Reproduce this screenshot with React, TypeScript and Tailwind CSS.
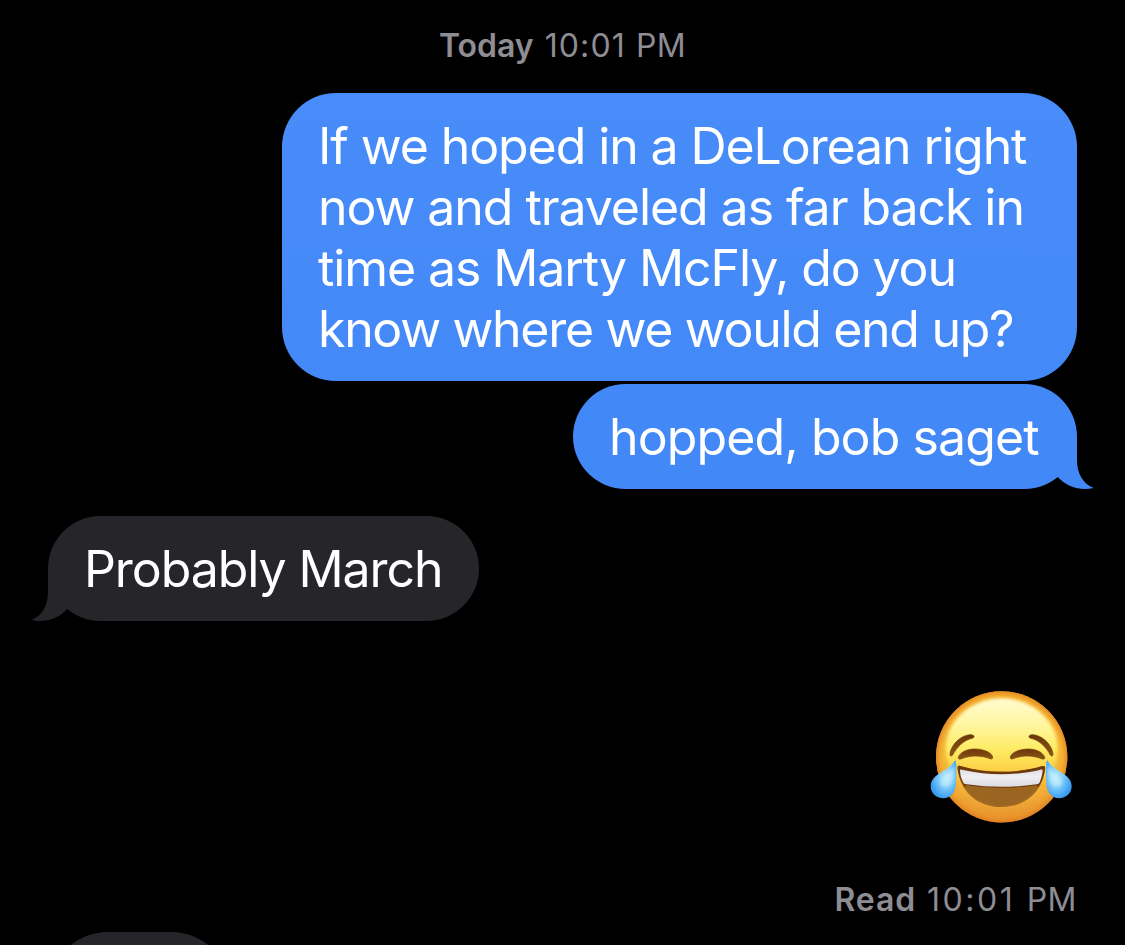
import React from 'react';
import clsx from 'clsx';

interface BubbleProps {
  sent?: boolean;
  tail?: boolean;
  className?: string;
  children?: React.ReactNode;
}

function Tail({ sent }: { sent?: boolean }): React.ReactElement {
  return (
    <svg
      viewBox="171 198 114 162"
      className={clsx(
        "absolute -bottom-px h-[54px] w-[38px]",
        sent ? "-right-[18px] fill-[#4288f7]" : "-left-[18px] -scale-x-100 fill-[#26252a]"
      )}
    >
      <path d="M231 270C231 312 250 342 281 354C240 362 202 352 173 321V198H231Z" />
    </svg>
  );
}

function Bubble({ sent, tail, className, children }: BubbleProps): React.ReactElement {
  return (
    <div
      className={clsx(
        "relative shrink-0 whitespace-nowrap pt-[23px] pl-9 text-[50px] leading-[61px] text-white",
        sent ? "self-end" : "self-start bg-[#26252a]",
        className
      )}
    >
      {tail && <Tail sent={sent} />}
      {children}
    </div>
  );
}

function JoyEmoji(): React.ReactElement {
  return (
    <svg viewBox="45 45 426 402" className="h-[134px] w-[142px]" role="img" aria-label="😂">
      <defs>
        <linearGradient id="face" x1="0" y1="0" x2="0" y2="1">
          <stop offset="0" stopColor="#f8c531" />
          <stop offset="0.15" stopColor="#f8c43c" />
          <stop offset="0.5" stopColor="#fbcd40" />
          <stop offset="0.78" stopColor="#f3b43c" />
          <stop offset="1" stopColor="#e5952f" />
        </linearGradient>
        <radialGradient id="rim" cx="0.5" cy="0.5" r="0.5">
          <stop offset="0.72" stopColor="#e98a22" stopOpacity="0" />
          <stop offset="0.92" stopColor="#e98a22" stopOpacity="0.38" />
          <stop offset="1" stopColor="#e07a20" stopOpacity="0.8" />
        </radialGradient>
        <linearGradient id="shine" x1="0" y1="0" x2="0" y2="1">
          <stop offset="0" stopColor="#fffbd0" />
          <stop offset="0.25" stopColor="#fff7a2" />
          <stop offset="0.5" stopColor="#feec65" />
          <stop offset="0.85" stopColor="#fcdb4c" stopOpacity="0" />
        </linearGradient>
        <linearGradient id="teeth" x1="0" y1="0" x2="0" y2="1">
          <stop offset="0" stopColor="#dcdce0" />
          <stop offset="0.4" stopColor="#f0f0f3" />
          <stop offset="1" stopColor="#dadadf" />
        </linearGradient>
        <linearGradient id="brown" x1="0" y1="0" x2="0" y2="1">
          <stop offset="0" stopColor="#6a3608" />
          <stop offset="1" stopColor="#8d5716" />
        </linearGradient>
        <radialGradient id="tear" cx="0.6" cy="0.42" r="0.6">
          <stop offset="0" stopColor="#b4e8fd" />
          <stop offset="0.45" stopColor="#84cffa" />
          <stop offset="1" stopColor="#3a9df0" />
        </radialGradient>
        <filter id="soft" x="-10%" y="-10%" width="120%" height="120%">
          <feGaussianBlur stdDeviation="5" />
        </filter>
        <g id="side">
          <path
            d="M105 237C108 209 138 179 168 179C178 179 181 188 171 190C147 195 125 217 113 240C110 245 104 243 105 237Z"
            fill="url(#brown)"
            stroke="#70400d"
            strokeWidth="2"
          />
          <path
            d="M130 247C134 233 156 221 180 222C207 222 230 233 233 246C234 253 228 253 222 250C195 240 164 241 140 251C133 254 129 252 130 247Z"
            fill="url(#brown)"
            stroke="#70400d"
            strokeWidth="2"
          />
        </g>
        <g id="drop">
          <path
            d="M122 258C126 270 124 306 123 328C121 354 106 370 85 370C64 370 47 354 47 334C47 316 59 304 79 292C97 281 111 270 117 260C119 256 121 255 122 258Z"
            fill="url(#tear)"
          />
          <path d="M116 275C117 300 113 331 94 335C76 337 71 318 84 307C99 296 109 286 116 275Z" fill="#d4f5fe" opacity="0.55" filter="url(#soft)" />
        </g>
      </defs>
      <circle cx="260" cy="245.5" r="197" fill="url(#face)" />
      <circle cx="260" cy="245.5" r="197" fill="url(#rim)" />
      <ellipse cx="260" cy="222" rx="168" ry="152" fill="url(#shine)" filter="url(#soft)" />
      <use href="#side" />
      <use href="#side" transform="translate(519 0) scale(-1 1)" />
      <path d="M128 281C126 272 133 271 139 274C215 296 304 296 380 274C387 271 392 274 390 282C383 352 329 396 259 396C190 396 135 352 128 281Z" fill="#a36b22" />
      <path d="M128 281C126 272 133 271 139 274C215 296 304 296 380 274C387 271 392 274 390 282C387 306 379 324 369 336C299 346 220 346 150 336C139 321 131 305 128 281Z" fill="#6f390b" />
      <path d="M150 330C220 341 299 341 369 330C348 371 307 391 259 391C212 391 171 371 150 330Z" fill="#9a6521" />
      <path d="M135 287C135 282 140 284 145 285C218 302 302 302 374 285C380 283 384 283 383 289C381 302 378 312 374 322C373 326 369 327 364 328C295 338 224 338 155 328C149 327 146 326 144 321C139 311 136 301 135 287Z" fill="url(#teeth)" />
      <use href="#drop" />
      <use href="#drop" transform="translate(517 0) scale(-1 1)" />
    </svg>
  );
}

export default function App(): React.ReactElement {
  return (
    <main className="flex h-[945px] w-[1125px] flex-col overflow-hidden bg-black pr-12 pl-12 font-['Inter',sans-serif]">
      <div className="mt-[26px] flex h-10 shrink-0 justify-center text-[32px] leading-10 whitespace-pre text-[#8e8d93]">
        <span className="font-semibold">Today </span>
        <span className="ml-[3px] tracking-[1.1px]">10:01 </span>
        <span className="tracking-[0.4px]">PM</span>
      </div>

      <Bubble sent className="mt-[27px] h-72 w-[795px] rounded-[54px] bg-linear-to-b from-[#488cf9] to-[#4389f7]">
        <p className="tracking-[-1.09px]">If we hoped in a DeLorean right</p>
        <p className="tracking-[-1.06px]">now and traveled as far back in</p>
        <p className="tracking-[-1.1px]">time as Marty McFly, do you</p>
        <p className="tracking-[-1.31px]">know where we would end up?</p>
      </Bubble>
      <Bubble sent tail className="mt-[3px] h-[105px] w-[504px] rounded-[52.5px] bg-[#4288f7]">
        <p className="tracking-[-0.89px]">hopped, bob saget</p>
      </Bubble>

      <Bubble tail className="mt-[27px] h-[105px] w-[431px] rounded-[52.5px]">
        <p className="tracking-[-1.08px]">Probably March</p>
      </Bubble>

      <div className="mt-[69px] mr-[5px] shrink-0 self-end">
        <JoyEmoji />
      </div>
      <div className="mt-[56px] flex h-10 shrink-0 self-end text-[32px] leading-10 whitespace-pre text-[#8e8d93]">
        <span className="font-semibold tracking-[0.9px]">Read </span>
        <span className="ml-[2px] tracking-[2.5px]">10:01 </span>
        <span className="tracking-[0.5px]">PM</span>
      </div>

      <Bubble className="mt-[12px] h-[120px] w-[183px] rounded-[60px]" />
    </main>
  );
}
